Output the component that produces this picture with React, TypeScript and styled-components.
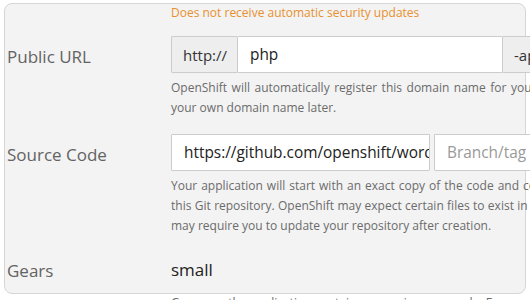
import React from "react";
import styled, { createGlobalStyle } from "styled-components";

const Global = createGlobalStyle`
  html, body { margin: 0; padding: 0; background: #ffffff; overflow: hidden; width: 530px; height: 300px; }
  body { font-family: "Open Sans", "DejaVu Sans", sans-serif; }
  * { box-sizing: border-box; }
`;

const Panel = styled.div`
  margin: 3px 0 0 4px;
  width: 522px;
  height: 291px;
  background: #f3f3f3;
  border: 1px solid #d6d6d6;
  border-radius: 8px;
  padding: 0 0 0 2px;
`;

const Row = styled.div<{ $mt?: number; $mb?: number }>`
  display: grid;
  grid-template-columns: 164px 700px;
  margin-top: ${(p) => p.$mt ?? 0}px;
  margin-bottom: ${(p) => p.$mb ?? 0}px;
`;

const Label = styled.div<{ $pt?: number }>`
  font-size: 17px;
  line-height: 22px;
  padding-top: ${(p) => p.$pt ?? 10}px;
  color: #636363;
`;

const Field = styled.div`
  display: flex;
  flex-direction: column;
`;

const Warning = styled.div`
  font-size: 12px;
  line-height: 18px;
  color: #e8902e;
  white-space: nowrap;
`;

const Group = styled.div`
  display: flex;
  align-items: stretch;
  height: 37px;
`;

const Addon = styled.div<{ $side: "left" | "right" }>`
  display: flex;
  align-items: center;
  padding: 0 10px 0 11px;
  background: #eeeeee;
  border: 1px solid #cccccc;
  ${(p) => (p.$side === "left" ? "border-right: none;" : "border-left: none;")}
  border-radius: ${(p) => (p.$side === "left" ? "2px 0 0 2px" : "0 2px 2px 0")};
  font-size: 15px;
  color: #333333;
  white-space: nowrap;
`;

const Input = styled.div<{ $w: number; $placeholder?: boolean; $gap?: number }>`
  width: ${(p) => p.$w}px;
  flex: none;
  height: 37px;
  margin-left: ${(p) => p.$gap ?? 0}px;
  padding: 8px 12px;
  background: #ffffff;
  border: 1px solid #cccccc;
  border-radius: 1px;
  font-size: 15.4px;
  line-height: 19px;
  color: ${(p) => (p.$placeholder ? "#999999" : "#222222")};
  white-space: nowrap;
  overflow: hidden;
`;

const Help = styled.div`
  margin-top: 5px;
  font-size: 12px;
  line-height: 20px;
  color: #6b6b6b;
`;

/* one line of a justified help paragraph; $w set = stretched line, unset = last line */
const Line = styled.span<{ $w?: number }>`
  display: block;
  white-space: nowrap;
  ${(p) =>
    p.$w
      ? `width: ${p.$w}px; text-align: justify; text-align-last: justify;`
      : "text-align: left;"}
`;

const Static = styled.div`
  padding: 8px 0;
  font-size: 17px;
  line-height: 20px;
  color: #222222;
`;

export default function App() {
  return (
    <>
      <Global />
      <Panel>
        <Row>
          <div />
          <Warning>Does not receive automatic security updates</Warning>
        </Row>
        <Row $mt={14} $mb={16}>
          <Label>Public URL</Label>
          <Field>
            <Group>
              <Addon $side="left">http://</Addon>
              <Input $w={266}>php</Input>
              <Addon $side="right">-appdomain.rhcloud.com</Addon>
            </Group>
            <Help>
              <Line $w={511}>
                OpenShift will automatically register this domain name for your application. You can add
              </Line>
              <Line>your own domain name later.</Line>
            </Help>
          </Field>
        </Row>
        <Row $mb={16}>
          <Label>Source Code</Label>
          <Field>
            <Group>
              <Input $w={259}>https://github.com/openshift/wordpress-example</Input>
              <Input $w={200} $gap={4} $placeholder>
                Branch/tag
              </Input>
            </Group>
            <Help>
              <Line $w={495}>
                Your application will start with an exact copy of the code and configuration provided in
              </Line>
              <Line $w={501}>
                this Git repository. OpenShift may expect certain files to exist in certain directories, which
              </Line>
              <Line>may require you to update your repository after creation.</Line>
            </Help>
          </Field>
        </Row>
        <Row>
          <Label $pt={8}>Gears</Label>
          <Field>
            <Static>small</Static>
            <Help>
              <Line>Gears are the application containers running your code. For most applications, the</Line>
            </Help>
          </Field>
        </Row>
      </Panel>
    </>
  );
}
